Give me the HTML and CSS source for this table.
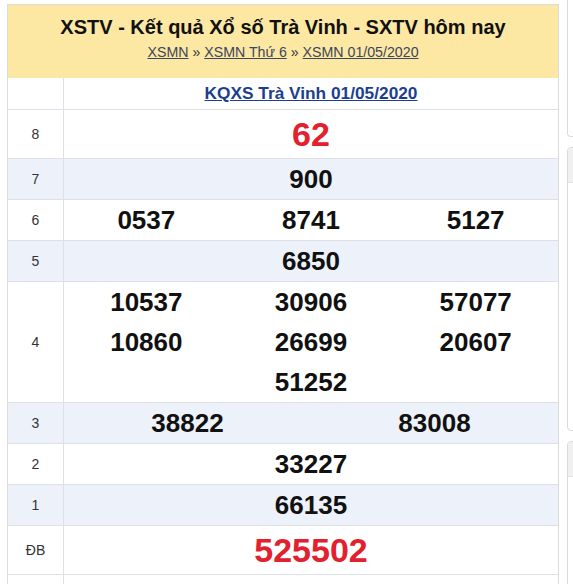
FILE: index.html
```html
<!DOCTYPE html>
<html lang="vi">
<head>
<meta charset="utf-8">
<title>XSTV - Kết quả Xổ số Trà Vinh</title>
<link rel="stylesheet" href="styles.css">
</head>
<body>
<div class="page">
  <main class="card">
    <header class="card-head">
      <h1 class="title">XSTV - Kết quả Xổ số Trà Vinh - SXTV hôm nay</h1>
      <div class="crumbs"><a href="#">XSMN</a> » <a href="#">XSMN Thứ 6</a> » <a href="#">XSMN 01/05/2020</a></div>
    </header>
    <div class="results">
      <div class="row row-cap">
        <div class="lbl"></div>
        <div class="val"><a class="kq" href="#">KQXS Trà Vinh 01/05/2020</a></div>
      </div>
      <div class="row tall">
        <div class="lbl">8</div>
        <div class="val red">62</div>
      </div>
      <div class="row alt">
        <div class="lbl">7</div>
        <div class="val">900</div>
      </div>
      <div class="row">
        <div class="lbl">6</div>
        <div class="val c3"><span>0537</span><span>8741</span><span>5127</span></div>
      </div>
      <div class="row alt">
        <div class="lbl">5</div>
        <div class="val">6850</div>
      </div>
      <div class="row">
        <div class="lbl">4</div>
        <div class="val c3"><span>10537</span><span>30906</span><span>57077</span><span>10860</span><span>26699</span><span>20607</span><span class="mid">51252</span></div>
      </div>
      <div class="row alt">
        <div class="lbl">3</div>
        <div class="val c2"><span>38822</span><span>83008</span></div>
      </div>
      <div class="row">
        <div class="lbl">2</div>
        <div class="val">33227</div>
      </div>
      <div class="row alt">
        <div class="lbl">1</div>
        <div class="val">66135</div>
      </div>
      <div class="row tall">
        <div class="lbl">ĐB</div>
        <div class="val red">525502</div>
      </div>
      <div class="row foot">
        <div class="lbl"></div>
        <div class="val"></div>
      </div>
    </div>
  </main>
  <aside class="side">
    <div class="box box-a"></div>
    <div class="box box-b"><div class="box-head"></div></div>
    <div class="box box-c"><div class="box-head"></div></div>
  </aside>
</div>
</body>
</html>
```

FILE: styles.css
```css
html, body {
  margin: 0;
  padding: 0;
  background: #fff;
  overflow: hidden;
}

body {
  font-family: "Liberation Sans", Arial, sans-serif;
  color: #111;
}

.page {
  display: flex;
  align-items: flex-start;
  gap: 8px;
  padding-left: 7px;
  width: 900px;
}

.card {
  width: 550px;
  flex: none;
  margin-top: 4px;
  border: 1px solid #dcdcdc;
  background: #fff;
}

.card-head {
  background: #fde8a3;
  padding: 10px 8px 17px;
  text-align: center;
  display: flex;
  flex-direction: column;
  gap: 4px;
}

.title {
  margin: 0;
  font-size: 20px;
  line-height: 24px;
  font-weight: bold;
  color: #111;
}

.crumbs {
  font-size: 14.2px;
  line-height: 18px;
  color: #333;
}

.crumbs a {
  color: #3a475c;
  text-decoration: underline;
}

.row {
  display: flex;
  border-bottom: 1px solid #dde1e7;
}

.row.alt {
  background: #edf1f9;
}

.lbl {
  width: 55px;
  flex: none;
  border-right: 1px solid #dde1e7;
  display: flex;
  align-items: center;
  justify-content: center;
  font-size: 14px;
  color: #333;
}

.val {
  flex: 1;
  min-height: 40px;
  display: flex;
  align-items: center;
  justify-content: center;
  font-size: 26px;
  line-height: 40px;
  font-weight: bold;
  color: #111;
}

.row-cap .val {
  min-height: 31px;
  line-height: 31px;
}

.kq {
  font-size: 17.3px;
  color: #1b3f8e;
  text-decoration: underline;
  font-weight: bold;
}

.tall .val {
  min-height: 48px;
  line-height: 48px;
}

.red {
  color: #e3202d;
  font-size: 34px;
}

.c3, .c2 {
  display: grid;
  justify-items: center;
}

.c3 {
  grid-template-columns: repeat(3, 1fr);
}

.c2 {
  grid-template-columns: repeat(2, 1fr);
}

.c3 .mid {
  grid-column: 2;
}

.foot .val {
  min-height: 30px;
}

.side {
  width: 300px;
  flex: none;
  display: flex;
  flex-direction: column;
  gap: 10px;
}

.box {
  border: 1px solid #dadada;
  border-radius: 4px;
  background: #fff;
}

.box-a {
  height: 136px;
  border-top: 0;
  border-radius: 0 0 4px 4px;
}

.box-b {
  height: 282px;
}

.box-c {
  height: 200px;
}

.box-head {
  height: 34px;
  background: #f0f0f0;
  border-bottom: 1px solid #e2e2e2;
  border-radius: 4px 4px 0 0;
}
```
